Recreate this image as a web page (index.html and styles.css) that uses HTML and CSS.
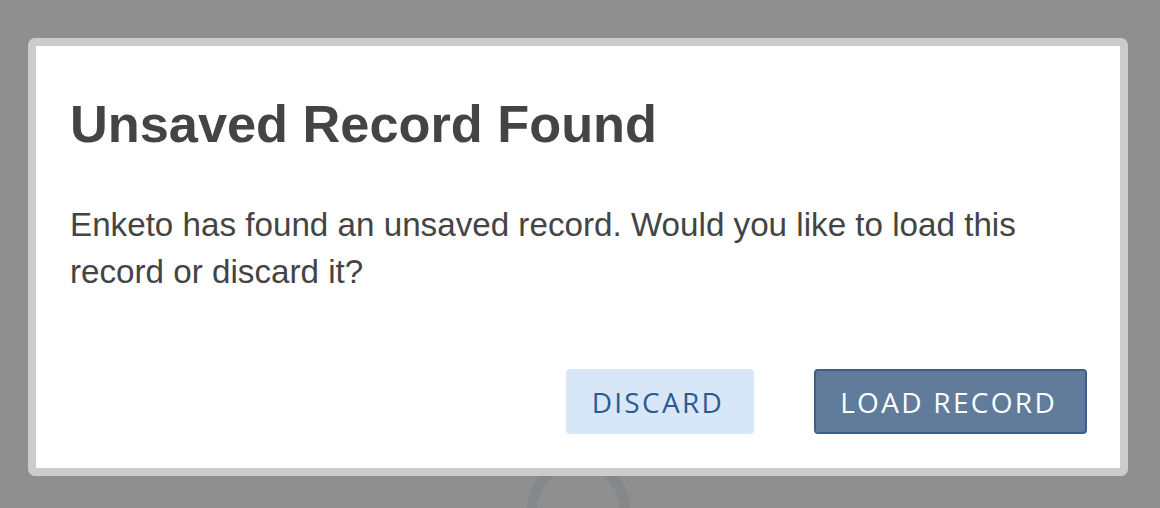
FILE: index.html
```html
<!DOCTYPE html>
<html lang="en">
<head>
<meta charset="utf-8">
<title>Unsaved Record Found</title>
<link rel="stylesheet" href="styles.css">
</head>
<body>
<div class="spinner" aria-hidden="true"></div>
<div class="modal" role="dialog" aria-labelledby="dlg-title">
  <div class="modal-inner">
    <h1 id="dlg-title" class="modal-title">Unsaved Record Found</h1>
    <p class="modal-text">Enketo has found an unsaved record. Would you like to load this record or discard it?</p>
    <div class="modal-actions">
      <button class="btn btn-secondary" type="button">Discard</button>
      <button class="btn btn-primary" type="button">Load Record</button>
    </div>
  </div>
</div>
</body>
</html>
```

FILE: styles.css
```css
html {
  margin: 0;
  height: 100%;
  overflow: hidden;
}

body {
  margin: 0;
  height: 100%;
  background: #8f8f8f;
  padding: 38px 32px 0 28px;
  box-sizing: border-box;
  position: relative;
  overflow: hidden;
  font-family: "Liberation Sans", Arial, Helvetica, sans-serif;
}

.spinner {
  position: absolute;
  left: 527px;
  top: 458px;
  width: 83px;
  height: 83px;
  border: 10px solid #84888b;
  border-radius: 50%;
}

.modal {
  position: relative;
  width: 1100px;
  box-sizing: border-box;
  border: 8px solid #cccccc;
  border-radius: 7px;
  background: #ffffff;
}

.modal-inner {
  padding: 34px 33px 34px 34px;
  display: flex;
  flex-direction: column;
}

.modal-title {
  margin: 13px 0 0;
  font-size: 52.3px;
  line-height: 62px;
  font-weight: bold;
  color: #444444;
}

.modal-text {
  margin: 46px 0 0;
  font-size: 33.2px;
  line-height: 47px;
  color: #444444;
}

.modal-actions {
  margin-top: 74px;
  display: flex;
  justify-content: flex-end;
  gap: 60px;
}

.btn {
  font-family: "Open Sans", "Noto Sans", sans-serif;
  font-size: 28px;
  letter-spacing: 2.3px;
  text-transform: uppercase;
  height: 65px;
  padding: 0 28px 0 24px;
  border-radius: 4px;
  display: flex;
  align-items: center;
  justify-content: center;
  cursor: pointer;
}

.btn-secondary {
  background: #d7e7f8;
  color: #2b5a92;
  border: 2px solid #d7e7f8;
}

.btn-primary {
  background: #607c9a;
  color: #ffffff;
  border: 2px solid #3e5f88;
}
```
